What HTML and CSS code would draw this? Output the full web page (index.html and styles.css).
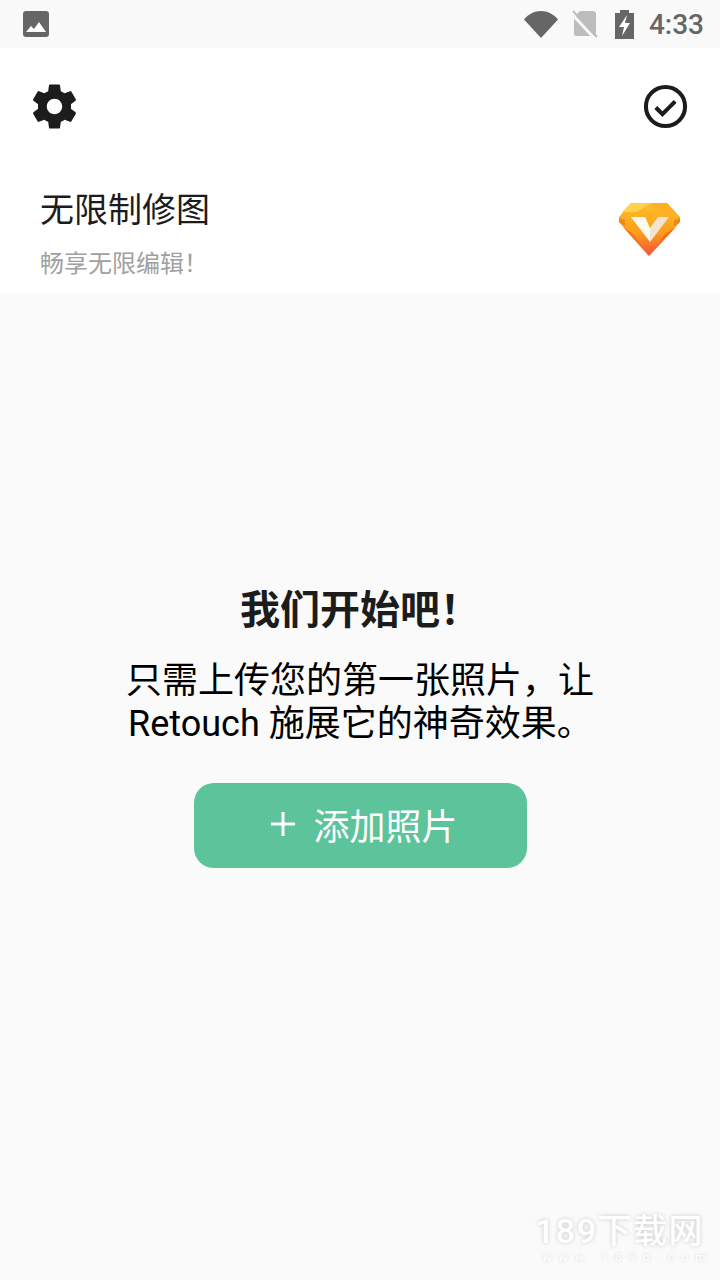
FILE: index.html
```html
<!DOCTYPE html>
<html lang="zh">
<head>
	<meta charset="UTF-8">
	<title>Retouch</title>
	<link rel="stylesheet" href="styles.css">
</head>
<body>
	<!-- 상태바 -->
	<div class="status">
		<svg class="ic-photo" viewBox="0 0 26 26">
			<rect width="26" height="26" rx="3" fill="#666"/>
			<path d="M3 21l5-6 3 3 5-7 7 10z" fill="#fff"/>
		</svg>
		<div class="status-right">
			<svg class="ic-wifi" viewBox="0 0 34 28"><path d="M0 9.500C4.500 4 10.500 1 17 1s12.500 3 17 8.500L17 28z" fill="#666"/></svg>
			<svg class="ic-sim" viewBox="0 0 26 28">
				<path d="M8 1h13a3 3 0 0 1 3 3v22H4a2 2 0 0 1-2-2V7z" fill="#bdbdbd"/>
				<path d="M-1 3l24 26" stroke="#f9f9f9" stroke-width="3"/>
				<path d="M1 1l24 26" stroke="#bdbdbd" stroke-width="2"/>
			</svg>
			<svg class="ic-batt" viewBox="0 0 19 29">
				<path d="M5 0h9v3h5v26H0V3h5z" fill="#666"/>
				<path d="M12 5L4 17h5l-2 9 8-13h-5l2-8z" fill="#fff"/>
			</svg>
			<span class="time">4:33</span>
		</div>
	</div>

	<!-- 상단 카드 -->
	<header class="top">
		<div class="toolbar">
			<svg class="ic-tool" viewBox="0 0 24 24"><path d="M19.430 12.980c.040-.320.070-.640.070-.980s-.030-.660-.070-.980l2.110-1.650c.190-.150.240-.420.120-.640l-2-3.460c-.120-.220-.390-.300-.610-.220l-2.490 1c-.520-.400-1.080-.730-1.690-.980l-.380-2.650C14.460 2.180 14.250 2 14 2h-4c-.250 0-.460.180-.490.420l-.380 2.650c-.610.250-1.170.590-1.690.980l-2.490-1c-.230-.090-.490 0-.610.220l-2 3.460c-.130.220-.070.490.120.640l2.110 1.650c-.040.320-.070.650-.070.980s.030.660.070.980l-2.110 1.650c-.190.150-.240.420-.120.640l2 3.460c.120.220.390.300.610.220l2.490-1c.520.400 1.080.730 1.690.980l.380 2.650c.030.240.240.420.490.420h4c.250 0 .460-.180.490-.420l.380-2.650c.610-.250 1.170-.590 1.690-.980l2.490 1c.230.090.490 0 .610-.220l2-3.460c.120-.220.070-.490-.120-.640l-2.110-1.650zM12 15.500c-1.930 0-3.500-1.570-3.500-3.500s1.570-3.500 3.500-3.500 3.500 1.570 3.500 3.500-1.570 3.500-3.500 3.500z" fill="#1c1c1c"/></svg>
			<svg class="ic-tool" viewBox="0 0 52 52">
				<circle cx="26" cy="26" r="19.200" fill="none" stroke="#1c1c1c" stroke-width="4"/>
				<path d="M16.500 27l6.500 6.500 12.500-12.500" fill="none" stroke="#1c1c1c" stroke-width="4"/>
			</svg>
		</div>
		<div class="promo">
			<div>
				<h2 class="promo-tit">无限制修图</h2>
				<p class="promo-sub">畅享无限编辑！</p>
			</div>
			<svg class="gem" viewBox="0 0 61 53">
				<defs>
					<linearGradient id="gemFill" x1="0" y1="0" x2="0" y2="1">
						<stop offset="0" stop-color="#ffbd2a"/>
						<stop offset=".55" stop-color="#fa9f1b"/>
						<stop offset="1" stop-color="#f6503f"/>
					</linearGradient>
				</defs>
				<path d="M12 0h36l13 14v5L30 53 0 19v-5z" fill="url(#gemFill)"/>
				<path d="M12 0h20L17 9H3z" fill="#ffd24a"/>
				<path d="M32 0h16l9 10H42z" fill="#ffb020"/>
				<path d="M0 15l6 2v7l-6-5z" fill="#ef8a14"/>
				<path d="M61 15l-6 2v7l6-5z" fill="#ef8a14"/>
				<path d="M4 24l26 29-16-22z" fill="#f4701d"/>
				<path d="M57 24L30 53l16-22z" fill="#f4701d"/>
				<path d="M12 14h14l5 11v14z" fill="#fffaf0"/>
				<path d="M50 14H39l-8 11v14z" fill="#f3e4d2"/>
			</svg>
		</div>
	</header>

	<!-- 본문 -->
	<main class="empty">
		<h1 class="empty-tit">我们开始吧！</h1>
		<p class="empty-txt">只需上传您的第一张照片，让<span class="line2">Retouch 施展它的神奇效果。</span></p>
		<a class="add-btn" href="#">
			<svg class="ic-plus" viewBox="0 0 26 26"><path d="M13 1v24M1 13h24" stroke="#fff" stroke-width="3"/></svg>
			<span>添加照片</span>
		</a>
	</main>

	<!-- 워터마크 -->
	<div class="mark">
		<div class="mark-big">189下载网</div>
		<div class="mark-small">www.189d.com</div>
	</div>
</body>
</html>
```

FILE: styles.css
```css
html,body,h1,h2,p{
	margin: 0;
	padding: 0;
}
body{
	position: relative;
	width: 720px;
	height: 1280px;
	overflow: hidden;
	background-color: #fafafa;
	font-family: Roboto, "Noto Sans CJK SC", sans-serif;
	color: #1c1c1c;
}

/* 상태바 */
.status{
	display: flex;
	justify-content: space-between;
	align-items: center;
	height: 48px;
	padding: 0 16px 0 23px;
	box-sizing: border-box;
	background-color: #f9f9f9;
}
.ic-photo{
	width: 26px;
	height: 26px;
}
.status-right{
	display: flex;
	align-items: center;
}
.ic-wifi{
	width: 34px;
	height: 28px;
	margin-right: 14px;
}
.ic-sim{
	width: 26px;
	height: 28px;
	margin-right: 17px;
}
.ic-batt{
	width: 19px;
	height: 29px;
	margin-right: 15px;
}
.time{
	font-size: 28px;
	font-weight: 500;
	color: #666;
}

/* 상단 카드 */
.top{
	height: 245px;
	background-color: #fff;
}
.toolbar{
	display: flex;
	justify-content: space-between;
	padding: 32px 28px 0 28px;
}
.ic-tool{
	display: block;
	width: 53px;
	height: 53px;
}
.promo{
	display: flex;
	justify-content: space-between;
	align-items: center;
	padding: 52px 40px 0 40px;
}
.promo-tit{
	font-size: 34px;
	font-weight: 400;
	line-height: 50px;
}
.promo-sub{
	font-size: 24px;
	line-height: 36px;
	margin-top: 11px;
	color: #a0a0a0;
}
.gem{
	display: block;
	width: 61px;
	height: 53px;
	margin-bottom: 8px;
}

/* 본문 */
.empty{
	display: flex;
	flex-direction: column;
	align-items: center;
	padding-top: 291px;
}
.empty-tit{
	font-size: 40px;
	font-weight: 700;
	line-height: 54px;
}
.empty-txt{
	margin-top: 22px;
	font-size: 36px;
	line-height: 43px;
	color: #000;
}
.line2{
	display: block;
	padding-left: 2px;
}
.add-btn{
	display: flex;
	justify-content: center;
	align-items: center;
	box-sizing: border-box;
	width: 333px;
	height: 85px;
	margin-top: 37px;
	padding: 0 0 3px 8px;
	border-radius: 20px;
	background-color: #5cc39b;
	color: #fff;
	font-size: 36px;
	text-decoration: none;
}
.ic-plus{
	width: 26px;
	height: 26px;
	margin-right: 17px;
}

/* 워터마크 */
.mark{
	position: absolute;
	right: 17px;
	bottom: 13px;
	width: 168px;
	color: #fff;
	text-shadow: 0 0 4px rgba(0,0,0,.2);
}
.mark-big{
	font-size: 34px;
	font-weight: 500;
	line-height: 36px;
	letter-spacing: 1.500px;
	white-space: nowrap;
}
.mark-small{
	font-size: 11px;
	line-height: 18px;
	padding-left: 8px;
	letter-spacing: 7.800px;
	white-space: nowrap;
}
```
